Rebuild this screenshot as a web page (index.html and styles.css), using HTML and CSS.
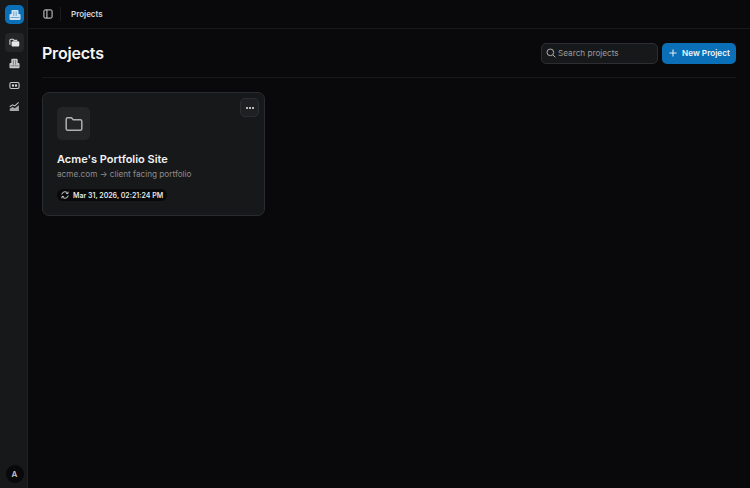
FILE: index.html
```html
<!DOCTYPE html>
<html lang="en">
<head>
<meta charset="utf-8">
<title>Projects</title>
<link rel="stylesheet" href="styles.css">
</head>
<body>
<div class="app">
  <aside class="rail">
    <div class="logo">
      <svg class="ic-logo" viewBox="0 0 12 12"><path d="M3.500 1h5a1 1 0 0 1 1 1v3h1a1 1 0 0 1 1 1v4a1 1 0 0 1-1 1h-9a1 1 0 0 1-1-1V6a1 1 0 0 1 1-1h1V2a1 1 0 0 1 1-1z" fill="#d3e4f2"/><path d="M4.800 2.500v4.500M7.200 2.500v4.500M1.500 8.500h9" stroke="#5c9fd0" stroke-width=".9"/></svg>
    </div>
    <nav class="rail-nav">
      <div class="rail-item active">
        <svg class="ic-nav" viewBox="0 0 12 12"><path d="M1 8.500V3.500a1 1 0 0 1 1-1h2.500l1 1.200H9" fill="none" stroke="#d8d8d8" stroke-width="1.200"/><rect x="2.800" y="4.600" width="8.400" height="5.800" rx="1.300" fill="#e6e6e6"/></svg>
      </div>
      <div class="rail-item">
        <svg class="ic-nav" viewBox="0 0 12 12"><path d="M3.500 .8h5a1 1 0 0 1 1 1v3.700h1a1 1 0 0 1 1 1v3.700a1 1 0 0 1-1 1h-9a1 1 0 0 1-1-1V6.500a1 1 0 0 1 1-1h1V1.800a1 1 0 0 1 1-1z" fill="#c9c9c9"/><path d="M4.800 2.300v5M7.200 2.300v5M1.500 8.500h9" stroke="#6e6e6e" stroke-width=".9"/></svg>
      </div>
      <div class="rail-item">
        <svg class="ic-nav" viewBox="0 0 12 12"><rect x="1" y="2.800" width="10" height="6.400" rx="1.500" fill="none" stroke="#c9c9c9" stroke-width="1.200"/><rect x="3.200" y="4.800" width="2.300" height="2.400" fill="#d8d8d8"/><rect x="6.500" y="4.800" width="2.300" height="2.400" fill="#d8d8d8"/></svg>
      </div>
      <div class="rail-item">
        <svg class="ic-nav" viewBox="0 0 12 12"><path d="M.8 11V8.500l3-2 2.500 1.300 4.500-3.300V11z" fill="#a8a8a8"/><path d="M.8 6.300l3-2.200 2.500 1.300L10.500 1.500" fill="none" stroke="#c4c4c4" stroke-width="1.100"/></svg>
      </div>
    </nav>
    <div class="avatar">A</div>
  </aside>
  <div class="main">
    <header class="topbar">
      <svg class="ic-toggle" viewBox="0 0 11 11"><rect x="1" y="1" width="9" height="9" rx="1.300" fill="none" stroke="#d5d5d5" stroke-width="1.100"/><path d="M4.300 1v9" stroke="#d5d5d5" stroke-width="1.100"/></svg>
      <span class="topsep"></span>
      <span class="crumb">Projects</span>
    </header>
    <section class="content">
      <div class="page-head">
        <h1>Projects</h1>
        <div class="actions">
          <label class="search">
            <svg class="ic-search" viewBox="0 0 12 12"><circle cx="5.200" cy="5.200" r="4" fill="none" stroke="#b0b0b0" stroke-width="1.200"/><path d="M8.200 8.200l3 3" stroke="#b0b0b0" stroke-width="1.200"/></svg>
            <span>Search projects</span>
          </label>
          <button class="new"><svg class="ic-plus" viewBox="0 0 10 10"><path d="M5 .5v9M.5 5h9" stroke="#e6f0f8" stroke-width="1.300"/></svg><span>New Project</span></button>
        </div>
      </div>
      <article class="card">
        <button class="more"><i></i><i></i><i></i></button>
        <div class="folder">
          <svg class="ic-folder" viewBox="0 0 18 16"><path d="M1.200 3.200a1.500 1.500 0 0 1 1.500-1.500h3.800l1.700 2h7.100a1.500 1.500 0 0 1 1.500 1.500v7.600a1.500 1.500 0 0 1-1.500 1.500H2.700a1.500 1.500 0 0 1-1.500-1.500z" fill="none" stroke="#b0b0b0" stroke-width="1.500"/></svg>
        </div>
        <h2>Acme's Portfolio Site</h2>
        <p>acme.com → client facing portfolio</p>
        <div class="stamp">
          <svg class="ic-sync" viewBox="0 0 10 10"><path d="M1 4.300A4 4 0 0 1 8.200 2.600M9 5.700A4 4 0 0 1 1.800 7.400" fill="none" stroke="#d8d8d8" stroke-width="1.200"/><path d="M8.800 .8v2.400H6.400M1.200 9.200V6.800h2.400" fill="none" stroke="#d8d8d8" stroke-width="1.100"/></svg>
          <span>Mar 31, 2026, 02:21:24 PM</span>
        </div>
      </article>
    </section>
  </div>
</div>
</body>
</html>
```
FILE: styles.css
```css
* { box-sizing: border-box; }
html, body { margin: 0; height: 100%; background: #09090b; }
body { font-family: Inter, "Liberation Sans", sans-serif; color: #f2f2f2; overflow: hidden; }
svg { display: block; flex: none; }
.ic-logo { width: 12px; height: 12px; }
.ic-nav { width: 11px; height: 11px; }
.ic-toggle { width: 10px; height: 10px; }
.ic-search { width: 10px; height: 10px; }
.ic-plus { width: 8px; height: 8px; }
.ic-sync { width: 8px; height: 8px; }
.ic-folder { width: 18px; height: 16px; }

.app { display: flex; height: 488px; width: 750px; }

.rail { width: 28px; flex: none; background: #17181a; border-right: 1px solid #1f2022; display: flex; flex-direction: column; align-items: center; padding: 5px 0 5px 2px; }
.logo { width: 19px; height: 19px; border-radius: 5px; background: #0b6fb8; display: flex; align-items: center; justify-content: center; }
.rail-nav { margin-top: 9px; display: flex; flex-direction: column; gap: 2.300px; }
.rail-item { width: 19px; height: 19px; border-radius: 4px; display: flex; align-items: center; justify-content: center; }
.rail-item.active { background: #242527; }
.avatar { margin-top: auto; width: 18px; height: 18px; border-radius: 50%; background: #09090b; color: #c8c8c8; font-size: 8px; font-weight: 600; display: flex; align-items: center; justify-content: center; }

.main { flex: 1; min-width: 0; display: flex; flex-direction: column; }
.topbar { height: 29px; flex: none; display: flex; align-items: center; padding-left: 15px; border-bottom: 1px solid #18191b; }
.topsep { width: 1px; height: 14px; background: #1a1b1d; margin: 0 10px 0 7px; }
.crumb { font-size: 8px; font-weight: 600; color: #d9d9d9; }

.content { padding: 0 14px; }
.page-head { display: flex; align-items: center; justify-content: space-between; height: 49px; border-bottom: 1px solid #18191b; }
h1 { margin: 0; font-size: 16px; line-height: 22px; font-weight: 600; color: #f5f5f5; letter-spacing: -.2px; }
.actions { display: flex; align-items: center; gap: 4px; }
.search { width: 117px; height: 21px; border: 1px solid #2d2e31; border-radius: 5px; background: #17181a; display: flex; align-items: center; gap: 2px; padding-left: 4px; font-size: 8.200px; color: #9c9c9c; }
.new { width: 74px; height: 21px; border: 0; border-radius: 5px; background: #0b6fb8; color: #eef5fb; font: 600 8.200px Inter, "Liberation Sans", sans-serif; display: flex; align-items: center; gap: 5px; padding: 0 0 0 7px; }

.card { position: relative; margin-top: 14px; width: 223px; height: 124px; background: #17181a; border: 1px solid #2a2b2e; border-radius: 7px; padding: 14px 14px 0; }
.more { position: absolute; top: 5px; right: 5px; width: 19px; height: 19px; border-radius: 5px; border: 1px solid #2d2e31; background: #1f2022; display: flex; align-items: center; justify-content: center; gap: 1px; padding: 0; }
.more i { width: 2px; height: 2px; border-radius: 50%; background: #ececec; }
.folder { width: 33px; height: 33px; border-radius: 5px; background: #242527; display: flex; align-items: center; justify-content: center; }
h2 { margin: 11px 0 0; font-size: 11px; line-height: 16px; font-weight: 600; color: #f2f2f2; }
.card p { margin: 1px 0 0; font-size: 8.200px; line-height: 12px; color: #8d8d8f; }
.stamp { margin-top: 9px; display: inline-flex; align-items: center; gap: 4px; height: 12px; padding: 0 4px; border-radius: 6px; background: #09090b; font-size: 7px; font-weight: 600; color: #e6e6e6; }
```
